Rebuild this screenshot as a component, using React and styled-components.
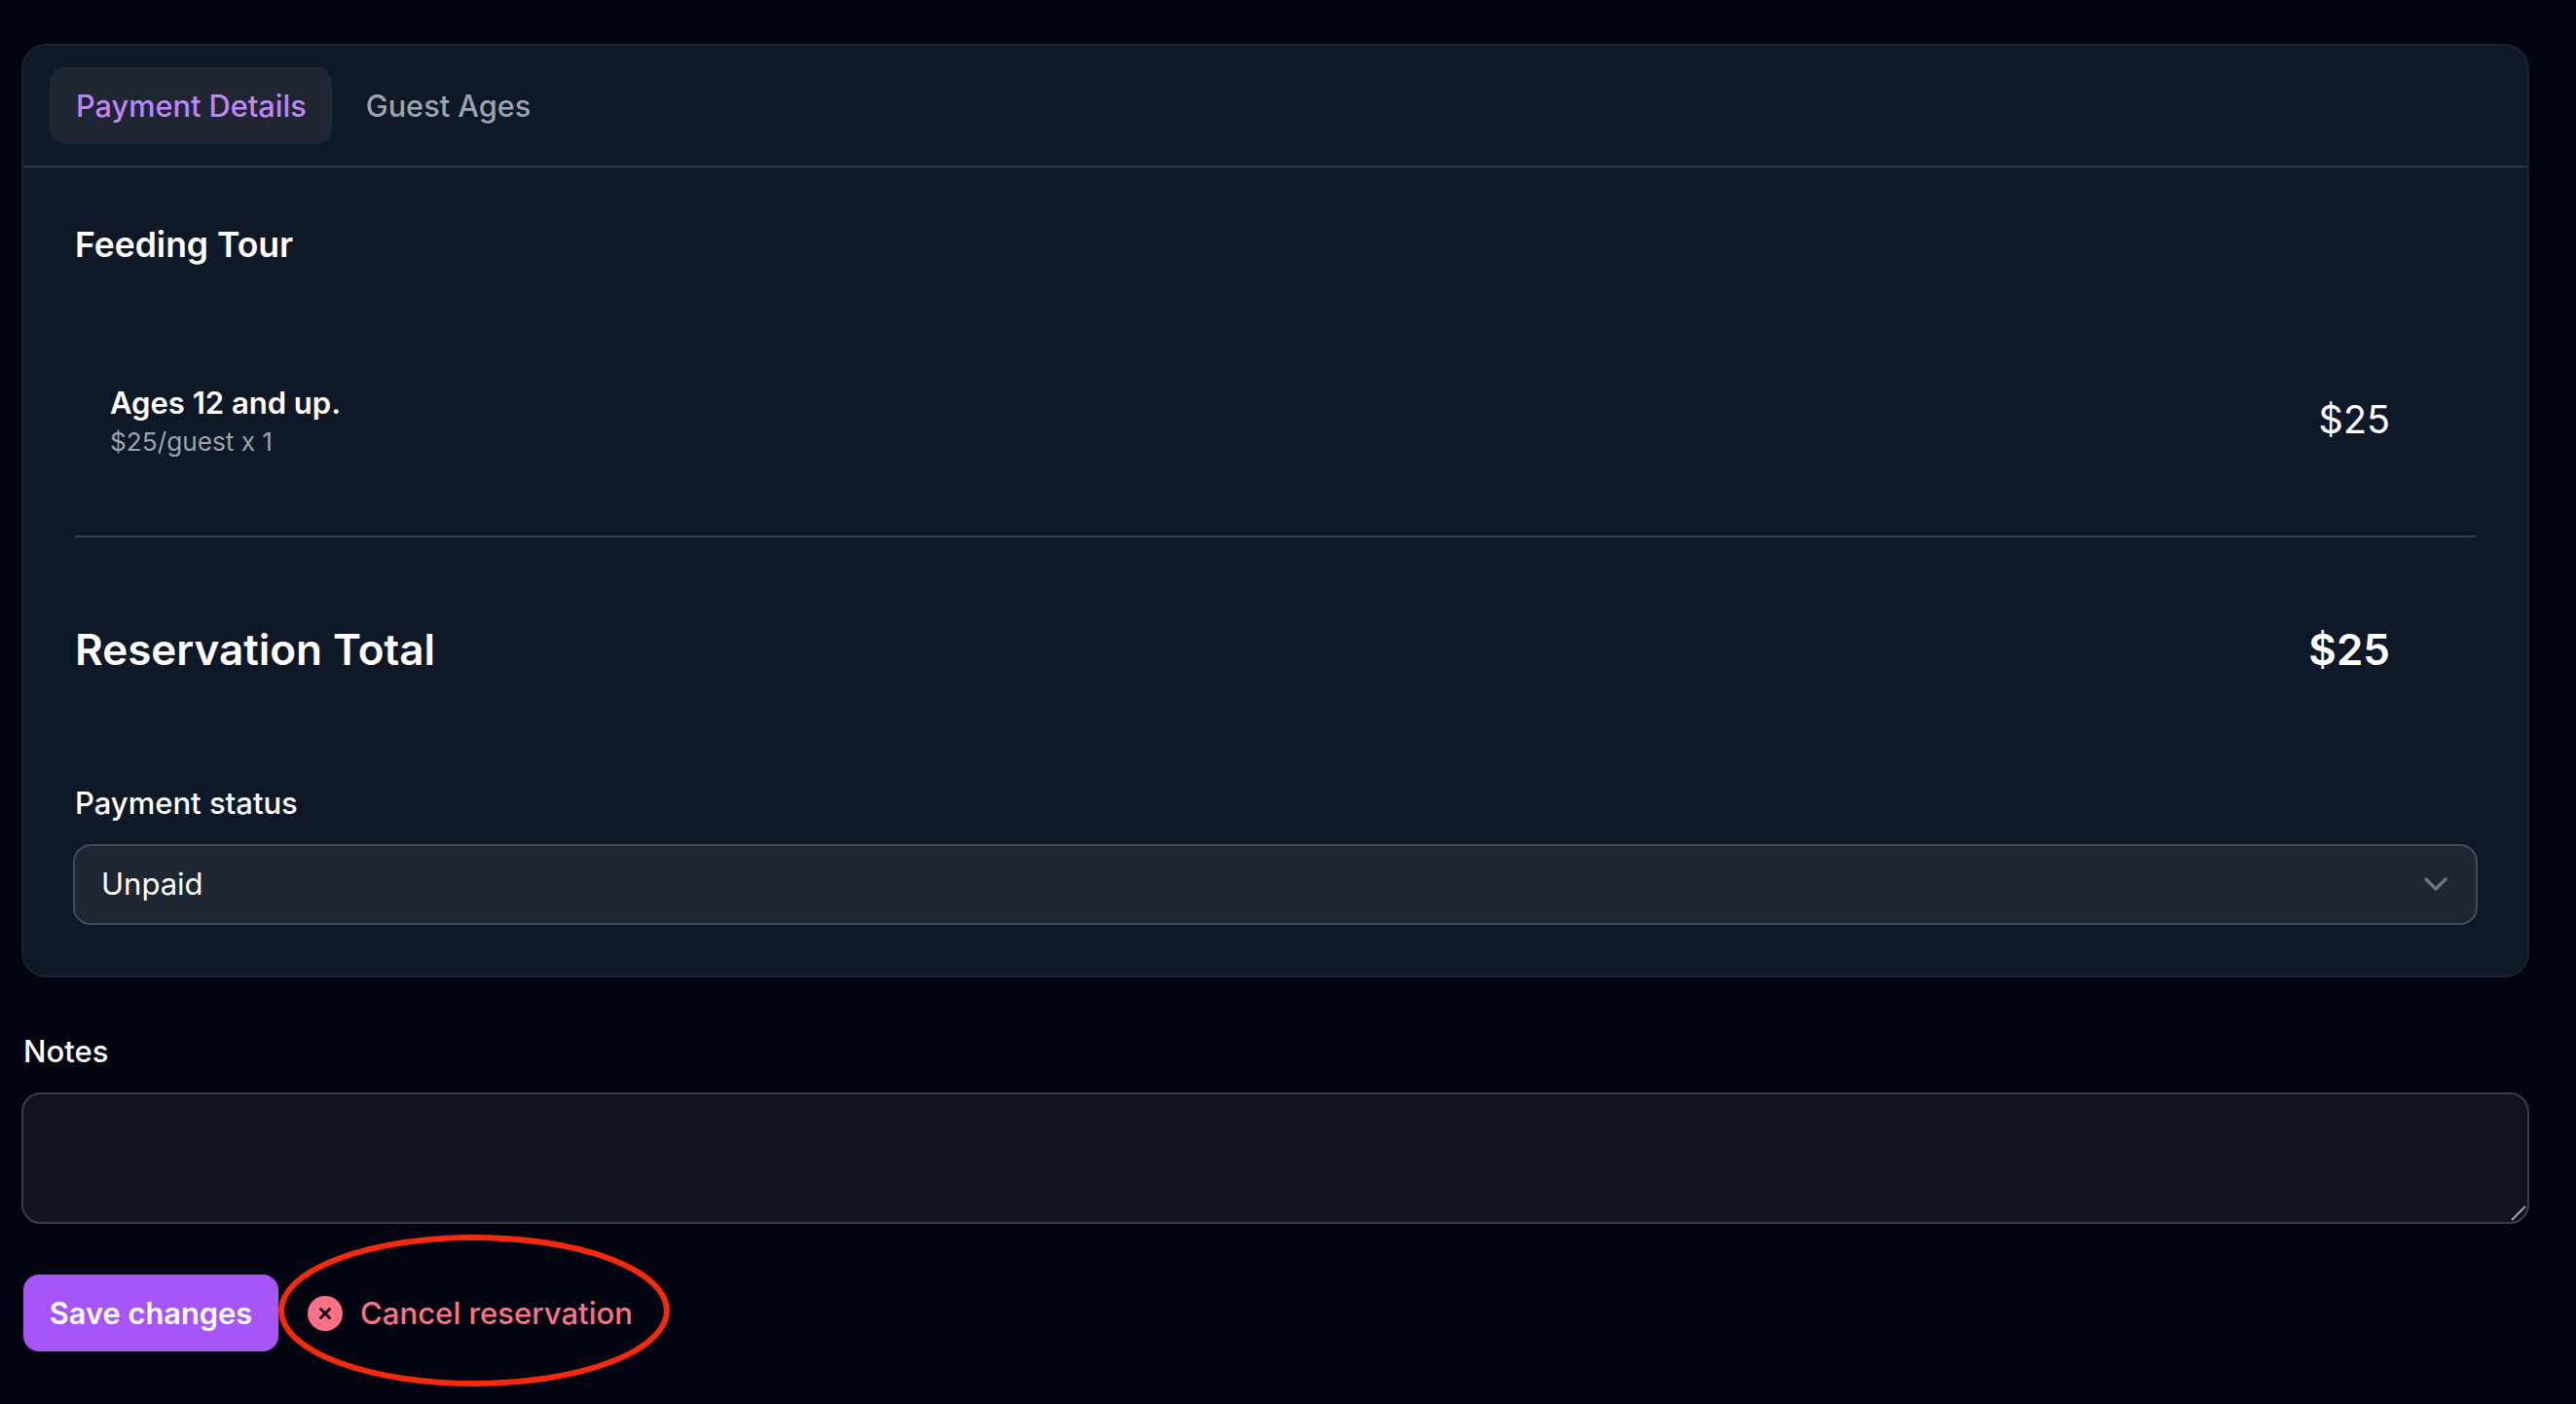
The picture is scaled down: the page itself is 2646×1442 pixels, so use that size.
import React from 'react';
import styled, { createGlobalStyle } from 'styled-components';

const GlobalStyle = createGlobalStyle`
    html, body {
        margin: 0;
        padding: 0;
        background: #02050f;
    }
    * {
        box-sizing: border-box;
    }
`

const Page = styled.div`
    width: 2646px;
    height: 1442px;
    overflow: hidden;
    padding: 45px 48px 0 22px;
    background: #02050f;
    color: #ffffff;
    font-family: Inter, "Liberation Sans", sans-serif;
`

const Card = styled.section`
    background: #0f1826;
    border: 2px solid #1b2330;
    border-radius: 26px;
`

const TabBar = styled.div`
    display: flex;
    gap: 8px;
    padding: 22px 27px 22px;
    border-bottom: 2px solid #2c3542;
`

const Tab = styled.button`
    height: 79px;
    padding: 0 26px 0 27px;
    border: 0;
    border-radius: 16px;
    background: ${props => props.active ? '#1e2632' : 'transparent'};
    color: ${props => props.active ? '#c084fc' : '#9ca3af'};
    font: 500 30.7px Inter, sans-serif;
`

const CardBody = styled.div`
    padding: 58px 53px 52px;
`

const TourTitle = styled.h3`
    margin: 0;
    font-size: 35.5px;
    font-weight: 600;
    line-height: 44px;
`

const LineItem = styled.div`
    display: flex;
    justify-content: space-between;
    align-items: center;
    margin: 121px 0 76px;
    padding: 0 88px 0 36px;
`

const ItemName = styled.div`
    font-size: 31px;
    font-weight: 600;
    line-height: 38px;
`

const ItemDetail = styled.div`
    padding-top: 1px;
    font-size: 26.2px;
    line-height: 40px;
    color: #9ca3af;
`

const ItemPrice = styled.div`
    font-size: 39.5px;
    line-height: 48px;
    margin-bottom: 7px;
`

const Divider = styled.hr`
    height: 2px;
    margin: 0;
    border: 0;
    background: #333d4b;
`

const TotalRow = styled.div`
    display: flex;
    justify-content: space-between;
    margin-top: 88px;
    padding-right: 88px;
    font-size: 44px;
    font-weight: 600;
    line-height: 54px;
`

const FieldLabel = styled.label`
    display: block;
    font-size: 31px;
    font-weight: 450;
    line-height: 40px;
`

const StatusLabel = styled(FieldLabel)`
    margin-top: 111px;
`

const SelectWrap = styled.div`
    position: relative;
    margin: 22px -2px 0;
`

const StatusSelect = styled.select`
    display: block;
    width: 100%;
    height: 83px;
    padding: 0 27px 2px;
    appearance: none;
    background: #1d2631;
    border: 2px solid #404a58;
    border-radius: 18px;
    color: #ffffff;
    font: 400 31px Inter, sans-serif;
`

const Chevron = styled.svg`
    position: absolute;
    top: 32px;
    right: 30px;
    width: 26px;
    height: 18px;
    fill: none;
    stroke: #6b7280;
    stroke-width: 3.5;
    stroke-linecap: round;
    stroke-linejoin: round;
    pointer-events: none;
`

const NotesLabel = styled(FieldLabel)`
    margin-top: 56px;
    padding-left: 2px;
`

const NotesWrap = styled.div`
    position: relative;
    margin-top: 22px;
`

const NotesInput = styled.textarea`
    display: block;
    width: 100%;
    height: 135px;
    background: #11141e;
    border: 2px solid #383e4a;
    border-radius: 20px;
    color: #ffffff;
    resize: none;
`

const ResizeGrip = styled.svg`
    position: absolute;
    right: 3px;
    bottom: 3px;
    width: 16px;
    height: 16px;
    stroke: #9ca3af;
    stroke-width: 2;
    pointer-events: none;
`

const Actions = styled.div`
    position: relative;
    display: flex;
    align-items: center;
    margin-top: 52px;
    padding-left: 2px;
`

const SaveButton = styled.button`
    width: 262px;
    height: 79px;
    border: 0;
    border-radius: 16px;
    background: #a855f7;
    color: #ffffff;
    font: 600 30.8px Inter, sans-serif;
`

const CancelButton = styled.button`
    display: flex;
    align-items: center;
    gap: 18px;
    padding: 0 0 0 30px;
    border: 0;
    background: transparent;
    color: #fb7185;
    font: 500 31.1px Inter, sans-serif;
`

const CancelIcon = styled.svg`
    width: 36px;
    height: 36px;
`

const Annotation = styled.svg`
    position: absolute;
    left: 264px;
    top: -41px;
    width: 402px;
    height: 156px;
    fill: none;
    stroke: #f42a0c;
    stroke-width: 6;
    pointer-events: none;
`

export default function App() {
    return (
        <Page>
            <GlobalStyle />
            <Card>
                <TabBar>
                    <Tab active>Payment Details</Tab>
                    <Tab>Guest Ages</Tab>
                </TabBar>
                <CardBody>
                    <TourTitle>Feeding Tour</TourTitle>
                    <LineItem>
                        <div>
                            <ItemName>Ages 12 and up.</ItemName>
                            <ItemDetail>$25/guest x 1</ItemDetail>
                        </div>
                        <ItemPrice>$25</ItemPrice>
                    </LineItem>
                    <Divider />
                    <TotalRow>
                        <span>Reservation Total</span>
                        <span>$25</span>
                    </TotalRow>
                    <StatusLabel htmlFor="payment-status">Payment status</StatusLabel>
                    <SelectWrap>
                        <StatusSelect id="payment-status" defaultValue="unpaid">
                            <option value="unpaid">Unpaid</option>
                            <option value="paid">Paid</option>
                        </StatusSelect>
                        <Chevron viewBox="0 0 26 18">
                            <path d="M3 4l10 10L23 4" />
                        </Chevron>
                    </SelectWrap>
                </CardBody>
            </Card>
            <NotesLabel htmlFor="notes">Notes</NotesLabel>
            <NotesWrap>
                <NotesInput id="notes" />
                <ResizeGrip viewBox="0 0 16 16">
                    <path d="M1 15L15 1" />
                </ResizeGrip>
            </NotesWrap>
            <Actions>
                <SaveButton>Save changes</SaveButton>
                <CancelButton>
                    <CancelIcon viewBox="0 0 36 36">
                        <circle cx="18" cy="18" r="18" fill="#fb7185" />
                        <path d="M13.5 13.5l9 9M22.5 13.5l-9 9" stroke="#1a0a14" strokeWidth="3" strokeLinecap="round" />
                    </CancelIcon>
                    Cancel reservation
                </CancelButton>
                <Annotation viewBox="0 0 402 156">
                    <ellipse cx="201" cy="78" rx="198" ry="75" />
                </Annotation>
            </Actions>
        </Page>
    );
}
